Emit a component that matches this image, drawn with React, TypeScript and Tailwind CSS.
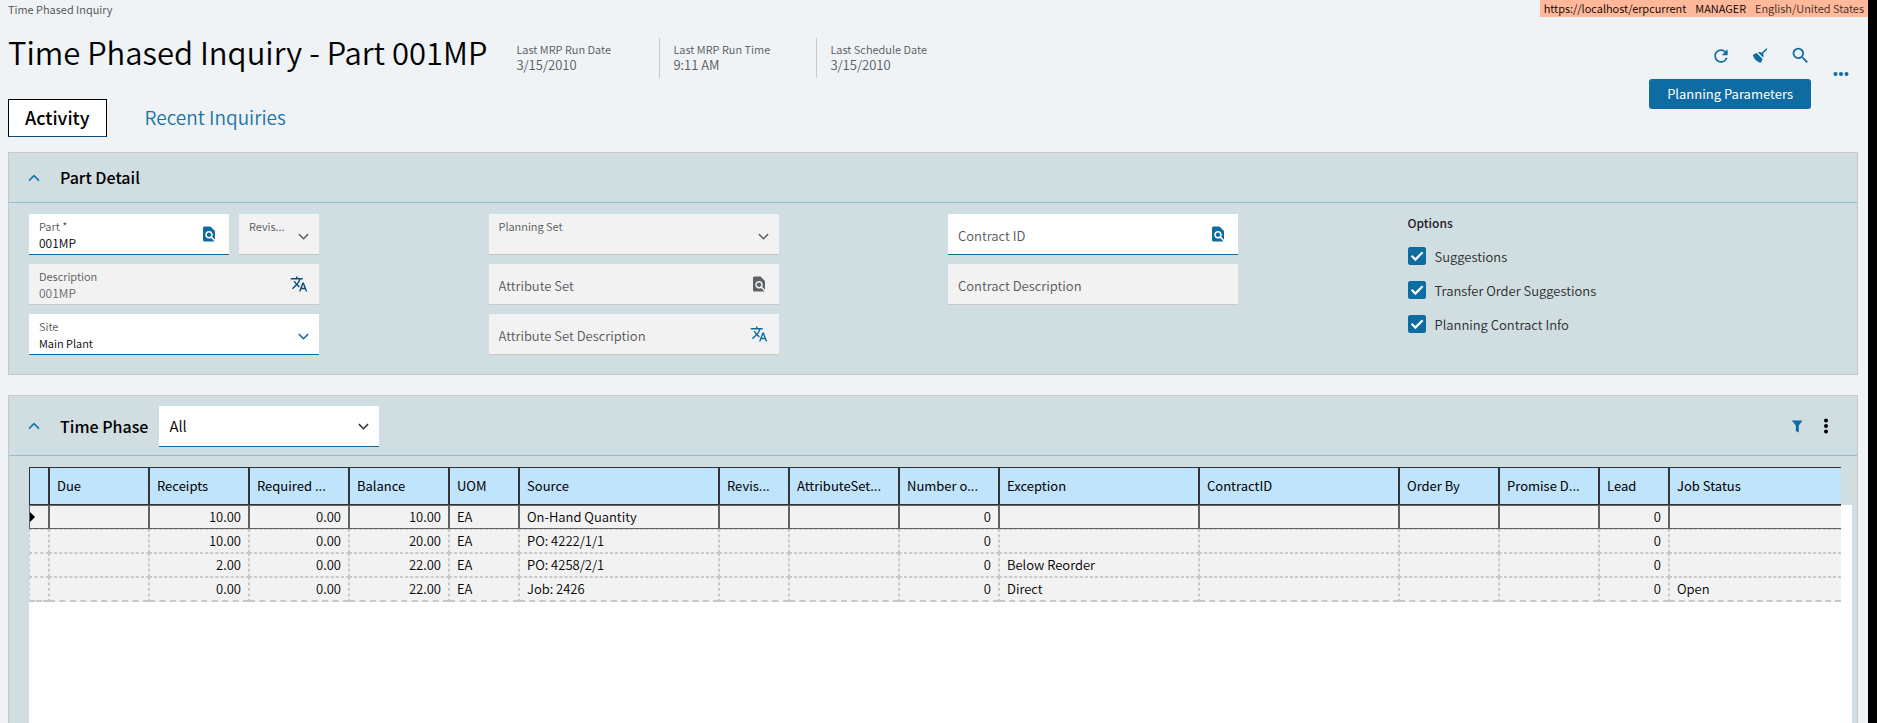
import React from "react";
import { MdFindInPage, MdRefresh, MdSearch, MdTranslate } from "react-icons/md";

type ChevronProps = { up?: boolean; size: number; className?: string };

function Chevron({ up = false, size, className = "" }: ChevronProps) {
  return (
    <svg
      width={size}
      height={size}
      viewBox="0 0 12 12"
      fill="none"
      stroke="currentColor"
      strokeWidth="1.6"
      className={"shrink-0 " + className}
      aria-hidden="true"
    >
      <path d={up ? "M1 8.6L6 3.6L11 8.6" : "M1 3.4L6 8.4L11 3.4"} />
    </svg>
  );
}

function BroomIcon() {
  return (
    <svg width="19" height="19" viewBox="0 0 24 24" fill="currentColor" aria-hidden="true">
      <path d="M19.36,2.72L20.78,4.14L15.06,9.85C16.13,11.39 16.28,13.24 15.38,14.44L9.06,8.12C10.26,7.22 12.11,7.37 13.65,8.44L19.36,2.72M5.93,17.57C3.92,15.56 2.69,13.16 2.35,10.92L7.23,8.83L14.67,16.27L12.58,21.15C10.34,20.81 7.94,19.58 5.93,17.57Z" />
    </svg>
  );
}

function Dots({ vertical = false }: { vertical?: boolean }) {
  return (
    <svg
      width={vertical ? 6 : 16}
      height={vertical ? 16 : 6}
      viewBox={vertical ? "0 0 6 16" : "0 0 16 6"}
      fill="currentColor"
      aria-hidden="true"
    >
      {[2.5, 8, 13.5].map((p) => (
        <circle key={p} cx={vertical ? 3 : p} cy={vertical ? p : 3} r="2" />
      ))}
    </svg>
  );
}

type FieldProps = {
  id: string;
  label: string;
  value?: string;
  editable?: boolean;
  icon?: "find" | "translate";
  iconClass?: string;
  className?: string;
};

function TextField({ id, label, value, editable = false, icon, iconClass = "", className = "" }: FieldProps) {
  return (
    <div
      className={
        "flex h-[41px] items-center border-b pl-[10px] pr-[11px] " +
        (editable ? "border-[#0f6ca3] bg-white " : "border-[#c8c8c8] bg-[#f2f2f2] ") +
        className
      }
    >
      <div className="flex min-w-0 flex-1 flex-col gap-px">
        {value !== undefined && (
          <label htmlFor={id} className="truncate text-[11px] leading-4 text-[#55585b]">
            {label}
          </label>
        )}
        <input
          id={id}
          aria-label={label}
          defaultValue={value}
          placeholder={value === undefined ? label : undefined}
          disabled={!editable}
          className={
            "w-full bg-transparent p-0 outline-none placeholder:text-[#55585b] placeholder:opacity-100 " +
            (value === undefined ? "h-10 pt-[2px] text-[13px] " : "h-4 text-[12px] leading-4 ") +
            (editable ? "text-black" : "text-[#65686a]")
          }
        />
      </div>
      {icon && (
        <button type="button" aria-label={"Open " + label} className={iconClass}>
          {icon === "find" ? <MdFindInPage size={18} /> : <MdTranslate size={18} />}
        </button>
      )}
    </div>
  );
}

type SelectProps = { id: string; label: string; value?: string; editable?: boolean; className?: string };

function SelectField({ id, label, value = "", editable = false, className = "" }: SelectProps) {
  return (
    <div
      className={
        "flex h-[41px] items-center border-b px-[10px] " +
        (editable ? "border-[#0f6ca3] bg-white " : "border-[#c8c8c8] bg-[#f2f2f2] ") +
        className
      }
    >
      <div className="flex min-w-0 flex-1 flex-col gap-px">
        <label htmlFor={id} className="text-[11px] leading-4 whitespace-nowrap text-[#55585b]">
          {label}
        </label>
        <select
          id={id}
          disabled={!editable}
          className="h-4 w-full appearance-none bg-transparent p-0 text-[11px] leading-4 text-black outline-none"
        >
          <option>{value}</option>
        </select>
      </div>
      <Chevron size={11} className={"mt-1 ml-2 " + (editable ? "text-[#0f6ca3]" : "text-[#606366]")} />
    </div>
  );
}

function Kpi({ label, value, last = false }: { label: string; value: string; last?: boolean }) {
  return (
    <div className={"flex h-10 flex-col pt-[3px] pl-[13px] " + (last ? "" : "w-[157px] border-r border-[#c8c8c8]")}>
      <span className="text-[11px] leading-4 whitespace-nowrap text-[#55585b]">{label}</span>
      <span className="text-[13px] leading-4 text-[#55585b]">{value}</span>
    </div>
  );
}

function Option({ label }: { label: string }) {
  return (
    <label className="flex items-center gap-[9px] text-[13px] leading-4 text-[#2b2b2b]">
      <span className="grid h-[18px] w-[18px] place-items-center">
        <input
          type="checkbox"
          defaultChecked
          className="peer col-start-1 row-start-1 h-[18px] w-[18px] appearance-none rounded-xs border border-[#0f6ca3] checked:bg-[#0f6ca3]"
        />
        <svg
          viewBox="0 0 18 18"
          fill="none"
          stroke="white"
          strokeWidth="2.2"
          className="pointer-events-none col-start-1 row-start-1 hidden h-[18px] w-[18px] peer-checked:block"
          aria-hidden="true"
        >
          <path d="M3.6 8.8L7.4 12.6L14.6 5.2" />
        </svg>
      </span>
      <span className="pt-[2px]">{label}</span>
    </label>
  );
}

type Column = { title: string; width?: number; right?: boolean };

const columns: Column[] = [
  { title: "", width: 20 },
  { title: "Due", width: 100 },
  { title: "Receipts", width: 100, right: true },
  { title: "Required ...", width: 100, right: true },
  { title: "Balance", width: 100, right: true },
  { title: "UOM", width: 70 },
  { title: "Source", width: 200 },
  { title: "Revis...", width: 70 },
  { title: "AttributeSet...", width: 110 },
  { title: "Number o...", width: 100, right: true },
  { title: "Exception", width: 200 },
  { title: "ContractID", width: 200 },
  { title: "Order By", width: 100 },
  { title: "Promise D...", width: 100 },
  { title: "Lead", width: 70, right: true },
  { title: "Job Status" },
];

const rows: string[][] = [
  ["", "", "10.00", "0.00", "10.00", "EA", "On-Hand Quantity", "", "", "0", "", "", "", "", "0", ""],
  ["", "", "10.00", "0.00", "20.00", "EA", "PO: 4222/1/1", "", "", "0", "", "", "", "", "0", ""],
  ["", "", "2.00", "0.00", "22.00", "EA", "PO: 4258/2/1", "", "", "0", "Below Reorder", "", "", "", "0", ""],
  ["", "", "0.00", "0.00", "22.00", "EA", "Job: 2426", "", "", "0", "Direct", "", "", "", "0", "Open"],
];

function PhaseGrid() {
  return (
    <table className="w-full table-fixed border-separate border-spacing-0 text-[13px] leading-4 text-black">
      <colgroup>
        {columns.map((c, i) => (
          <col key={i} style={c.width ? { width: c.width } : undefined} />
        ))}
      </colgroup>
      <thead>
        <tr>
          {columns.map((c, i) => (
            <th
              key={i}
              scope="col"
              className={
                "h-[38px] border border-[#333] bg-[#bfe4fb] px-[7px] text-left text-[13px] font-normal whitespace-nowrap " +
                (i === columns.length - 1 ? "border-r-0" : "")
              }
            >
              {c.title}
            </th>
          ))}
        </tr>
      </thead>
      <tbody>
        {rows.map((row, r) => (
          <tr key={r}>
            {row.map((cell, i) => (
              <td
                key={i}
                className={
                  "truncate border bg-[#f2f2f2] py-0 " +
                  (i === 0 ? "px-0 " : "px-[7px] ") +
                  (r === 0 ? "border-[#606366] " : "border-dashed border-[#c8c8c8] ") +
                  (columns[i].right ? "text-right " : "") +
                  (i === columns.length - 1 ? "border-r-0 " : "") +
                  (r === rows.length - 1 ? "h-[25px] border-b-2" : "h-6")
                }
              >
                {r === 0 && i === 0 ? (
                  <svg width="5" height="10" viewBox="0 0 5 10" aria-hidden="true">
                    <path d="M0 0L5 5L0 10Z" fill="black" />
                  </svg>
                ) : (
                  cell
                )}
              </td>
            ))}
          </tr>
        ))}
      </tbody>
    </table>
  );
}

export default function App() {
  return (
    <div className="flex min-h-screen bg-black pr-[9px] font-['Noto_Sans_CJK_SC','Noto_Sans',sans-serif] font-[350]">
      <div className="flex min-w-0 flex-1 flex-col bg-[#eff3f6]">
        <div className="flex h-[17px] items-start justify-between pl-2">
          <nav aria-label="Breadcrumb" className="text-[11px] leading-[18px] text-[#4a4d50]">
            Time Phased Inquiry
          </nav>
          <div className="flex h-full items-center gap-[9px] bg-[#ffb899] px-1 pb-[2px] text-[11px] leading-4 text-black">
            <span>https://localhost/erpcurrent</span>
            <span>MANAGER</span>
            <span className="text-[#3a2d28]">English/United States</span>
          </div>
        </div>

        <header className="flex h-[135px] justify-between">
          <div className="flex flex-col pl-2 pt-[21px]">
            <div className="flex items-start">
              <h1 className="text-[31px] leading-7 whitespace-nowrap text-black">
                Time Phased Inquiry - Part 001MP
              </h1>
              <div className="ml-4 flex">
                <Kpi label="Last MRP Run Date" value="3/15/2010" />
                <Kpi label="Last MRP Run Time" value="9:11 AM" />
                <Kpi label="Last Schedule Date" value="3/15/2010" last />
              </div>
            </div>
            <div role="tablist" className="mt-[21px] flex">
              <button
                type="button"
                role="tab"
                aria-selected="true"
                className="h-[38px] border border-black border-b-[#0f4c75] bg-white px-4 pb-[2px] text-[18px] leading-6 font-medium text-black"
              >
                Activity
              </button>
              <button
                type="button"
                role="tab"
                aria-selected="false"
                className="ml-5 h-[38px] px-[18px] pb-[2px] text-[19px] leading-6 text-[#1b73a8]"
              >
                Recent Inquiries
              </button>
            </div>
          </div>
          <div className="flex items-start gap-[22px] pt-7 pr-[19px] text-[#0f6ca3]">
            <div className="flex flex-col items-end">
              <div className="flex items-center gap-5">
                <button type="button" aria-label="Refresh">
                  <MdRefresh size={20} />
                </button>
                <button type="button" aria-label="Clear">
                  <BroomIcon />
                </button>
                <button type="button" aria-label="Search">
                  <MdSearch size={21} />
                </button>
              </div>
              <button
                type="button"
                className="mt-[13px] h-[30px] rounded-[3px] bg-[#0f6ca3] px-[18px] text-[13px] leading-4 font-normal text-white"
              >
                Planning Parameters
              </button>
            </div>
            <button type="button" aria-label="More actions" className="mt-[26px]">
              <Dots />
            </button>
          </div>
        </header>

        <section className="mr-[10px] ml-2 border border-[#c8c8c8] bg-[#d0dde1]">
          <div className="flex h-[50px] items-center border-b border-[#92bfcb] pl-[19px]">
            <button type="button" aria-label="Collapse Part Detail" className="text-[#1b73a8]">
              <Chevron up size={12} />
            </button>
            <h2 className="ml-5 pb-px text-[16px] leading-5 font-medium text-black">Part Detail</h2>
          </div>
          <div className="grid grid-cols-4 gap-[30px] px-5 pt-[11px] pb-[19px]">
            <div className="flex max-w-[290px] flex-col gap-[9px]">
              <div className="flex gap-[10px]">
                <TextField
                  id="part"
                  label="Part *"
                  value="001MP"
                  editable
                  icon="find"
                  iconClass="text-[#0f6ca3]"
                  className="min-w-0 flex-1"
                />
                <SelectField id="revision" label="Revis..." className="w-20" />
              </div>
              <TextField
                id="description"
                label="Description"
                value="001MP"
                icon="translate"
                iconClass="text-[#0f4c75]"
              />
              <SelectField id="site" label="Site" value="Main Plant" editable />
            </div>
            <div className="flex max-w-[290px] flex-col gap-[9px]">
              <SelectField id="planning-set" label="Planning Set" />
              <TextField id="attribute-set" label="Attribute Set" icon="find" iconClass="text-[#606366]" />
              <TextField
                id="attribute-set-description"
                label="Attribute Set Description"
                icon="translate"
                iconClass="text-[#0f6ca3]"
              />
            </div>
            <div className="flex max-w-[290px] flex-col gap-[9px]">
              <TextField id="contract-id" label="Contract ID" editable icon="find" iconClass="text-[#0f6ca3]" />
              <TextField id="contract-description" label="Contract Description" />
            </div>
            <fieldset className="min-w-0">
              <legend className="pt-px text-[12px] leading-4 font-medium text-[#222]">Options</legend>
              <div className="flex flex-col gap-4 pt-4">
                <Option label="Suggestions" />
                <Option label="Transfer Order Suggestions" />
                <Option label="Planning Contract Info" />
              </div>
            </fieldset>
          </div>
        </section>

        <section className="mt-5 mr-[10px] ml-2 flex flex-1 flex-col border border-b-0 border-[#c8c8c8] bg-[#d0dde1]">
          <div className="flex h-[60px] items-center border-b border-[#92bfcb] pt-px pr-7 pl-[19px]">
            <button type="button" aria-label="Collapse Time Phase" className="text-[#1b73a8]">
              <Chevron up size={12} />
            </button>
            <h2 className="ml-5 pb-px text-[16px] leading-5 font-medium text-black">Time Phase</h2>
            <div className="ml-[11px] flex h-[41px] w-[220px] items-center border-b border-[#0f6ca3] bg-white px-[10px]">
              <select
                aria-label="Time Phase"
                className="h-10 min-w-0 flex-1 appearance-none bg-transparent text-[15px] leading-5 text-black outline-none"
              >
                <option>All</option>
              </select>
              <Chevron size={11} className="mt-[2px] text-[#333]" />
            </div>
            <div className="ml-auto flex items-center gap-5">
              <button type="button" aria-label="Filter" className="text-[#0f6ca3]">
                <svg width="12" height="13" viewBox="0 0 12 13" fill="currentColor" aria-hidden="true">
                  <path d="M0.8 0.5H11.6L7.8 5.6V12.4L4.8 11V5.6Z" />
                </svg>
              </button>
              <button type="button" aria-label="More options" className="text-black">
                <Dots vertical />
              </button>
            </div>
          </div>
          <div className="mt-[11px] mr-[5px] ml-5 flex-1 bg-[linear-gradient(to_bottom,transparent_38px,white_38px)] pr-[11px]">
            <PhaseGrid />
          </div>
        </section>
      </div>
    </div>
  );
}
